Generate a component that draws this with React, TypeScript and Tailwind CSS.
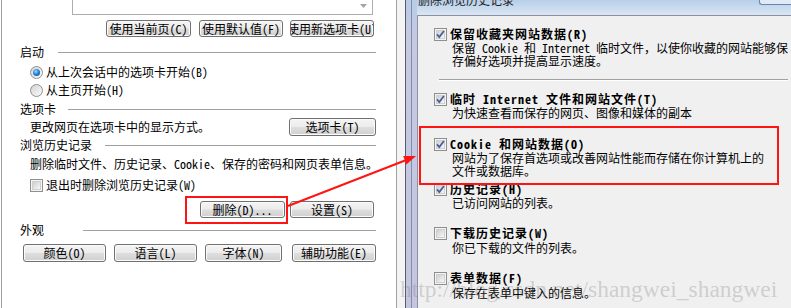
import type { ReactNode } from 'react';

function WinButton({ children, className = '' }: { children: ReactNode; className?: string }) {
  return (
    <div
      className={`flex shrink-0 items-center justify-center overflow-hidden whitespace-nowrap rounded-[3px] border border-[#707070] bg-[linear-gradient(to_bottom,#f4f4f4_0%,#ececec_48%,#dedede_52%,#d0d0d0_100%)] text-[12px] leading-none text-black shadow-[inset_0_0_0_1px_#fbfbfb] ${className}`}
    >
      {children}
    </div>
  );
}

function GroupHeader({ title, lineGap }: { title: string; lineGap: string }) {
  return (
    <div className="flex h-[14px] items-center">
      <span className="shrink-0 leading-[14px]">{title}</span>
      <div className={`h-px flex-1 bg-[#a0a0a0] ${lineGap}`} />
    </div>
  );
}

function Radio({ checked }: { checked?: boolean }) {
  return (
    <span className="flex h-[13px] w-[13px] shrink-0 items-center justify-center rounded-full border border-[#8e8f8f] bg-[linear-gradient(135deg,#d4d4d4,#fafafa)]">
      {checked && (
        <span className="h-[7px] w-[7px] rounded-full bg-[radial-gradient(circle_at_40%_35%,#9fdcff_0%,#2a84dc_45%,#0d3f8c_100%)]" />
      )}
    </span>
  );
}

function CheckBox({ checked }: { checked?: boolean }) {
  return (
    <span className="relative flex h-[13px] w-[13px] shrink-0 items-center justify-center border border-[#8e8f8f] bg-[#f4f4f4]">
      <span className="h-[9px] w-[9px] border border-[#cfcfcf] bg-[linear-gradient(135deg,#cfcfcf,#f7f7f7)]" />
      {checked && (
        <svg className="absolute inset-0" width="11" height="11" viewBox="0 0 11 11">
          <path d="M2 5.4 L4.3 8 L8.9 2" fill="none" stroke="#47609a" strokeWidth="1.8" />
        </svg>
      )}
    </span>
  );
}

function LeftPanel() {
  return (
    <div className="ml-px flex h-[308px] w-[396px] shrink-0 flex-col border-x border-[#a0a0a0] bg-white pl-[18px] pr-[20px]">
      {/* home page box, scrolled out of view */}
      <div className="ml-[52px] mr-[3px] flex h-[15px] justify-end border-x border-b border-[#abadb3]">
        <div className="flex w-[18px] justify-center pt-[4px]">
          <svg width="7" height="4" viewBox="0 0 7 4">
            <path d="M0 0 L7 0 L3.5 4 Z" fill="#a4a4a4" />
          </svg>
        </div>
      </div>

      <div className="mt-[5px] flex justify-end pr-[2px]">
        <WinButton className="h-[17px] w-[85px]">使用当前页(C)</WinButton>
        <WinButton className="ml-[8px] h-[17px] w-[84px]">使用默认值(F)</WinButton>
        <WinButton className="ml-[7px] h-[17px] w-[84px]">使用新选项卡(U)</WinButton>
      </div>

      <div className="mt-[8px]">
        <GroupHeader title="启动" lineGap="ml-[14px]" />
      </div>
      <div className="mt-[4px] flex h-[18px] items-center pl-[10px]">
        <Radio checked />
        <span className="ml-[3px]">从上次会话中的选项卡开始(B)</span>
      </div>
      <div className="flex h-[18px] items-center pl-[10px]">
        <Radio />
        <span className="ml-[3px]">从主页开始(H)</span>
      </div>

      <div className="mt-[3px]">
        <GroupHeader title="选项卡" lineGap="ml-[12px]" />
      </div>
      <div className="mt-[2px] flex h-[18px] items-center justify-between pl-[10px]">
        <span>更改网页在选项卡中的显示方式。</span>
        <WinButton className="h-[18px] w-[87px]">选项卡(T)</WinButton>
      </div>

      <div className="mt-[2px]">
        <GroupHeader title="浏览历史记录" lineGap="ml-[13px]" />
      </div>
      <div className="mt-[5px] h-[14px] whitespace-nowrap pl-[10px] leading-[14px]">
        删除临时文件、历史记录、Cookie、保存的密码和网页表单信息。
      </div>
      <div className="mt-[7px] flex h-[14px] items-center pl-[10px]">
        <CheckBox />
        <span className="ml-[3px]">退出时删除浏览历史记录(W)</span>
      </div>
      <div className="mt-[9px] flex justify-end pr-[2px]">
        <WinButton className="h-[17px] w-[85px]">删除(D)...</WinButton>
        <WinButton className="ml-[5px] h-[17px] w-[84px]">设置(S)</WinButton>
      </div>

      <div className="mt-[5px]">
        <GroupHeader title="外观" lineGap="ml-[39px]" />
      </div>
      <div className="mt-[7px] flex pl-[3px]">
        <WinButton className="h-[18px] w-[83px]">颜色(O)</WinButton>
        <WinButton className="ml-[8px] h-[18px] w-[83px]">语言(L)</WinButton>
        <WinButton className="ml-[8px] h-[18px] w-[77px]">字体(N)</WinButton>
        <WinButton className="ml-[10px] h-[18px] w-[84px]">辅助功能(E)</WinButton>
      </div>
    </div>
  );
}

const sections = [
  {
    title: '保留收藏夹网站数据(R)',
    desc: ['保留 Cookie 和 Internet 临时文件，以使你收藏的网站能够保', '存偏好选项并提高显示速度。'],
    checked: true,
    gap: 'mt-[11px]',
    descGap: 'mt-0',
  },
  {
    title: '临时 Internet 文件和网站文件(T)',
    desc: ['为快速查看而保存的网页、图像和媒体的副本'],
    checked: true,
    gap: 'mt-[11px]',
    descGap: 'mt-0',
  },
  {
    title: 'Cookie 和网站数据(O)',
    desc: ['网站为了保存首选项或改善网站性能而存储在你计算机上的', '文件或数据库。'],
    checked: true,
    gap: 'mt-[18px]',
    descGap: 'mt-0',
  },
  {
    title: '历史记录(H)',
    desc: ['已访问网站的列表。'],
    checked: true,
    gap: 'mt-[5px]',
    descGap: 'mt-0',
  },
  {
    title: '下载历史记录(W)',
    desc: ['你已下载的文件的列表。'],
    checked: false,
    gap: 'mt-[17px]',
    descGap: 'mt-[1px]',
  },
  {
    title: '表单数据(F)',
    desc: ['保存在表单中键入的信息。'],
    checked: false,
    gap: 'mt-[17px]',
    descGap: 'mt-[1px]',
  },
];

function Section({ s }: { s: (typeof sections)[number] }) {
  return (
    <div className={s.gap}>
      <div className="flex h-[14px] items-center">
        <CheckBox checked={s.checked} />
        <span className="ml-[3px] whitespace-nowrap font-bold leading-[14px] tracking-[1px]">{s.title}</span>
      </div>
      <div className={`pl-[18px] ${s.descGap}`}>
        {s.desc.map(line => (
          <div key={line} className="h-[13px] whitespace-nowrap leading-[13px]">
            {line}
          </div>
        ))}
      </div>
    </div>
  );
}

function RightDialog() {
  return (
    <div className="flex h-[308px] w-[386px] shrink-0 border-l border-[#5a5c6c] bg-[linear-gradient(to_bottom,#b7cde7_0px,#c5c9e3_40px,#c3c5e1_100%)]">
      <div className="w-[6px] shrink-0 border-r border-[#8a8ca6]" />
      <div className="w-[5px] shrink-0" />
      <div className="flex min-w-0 flex-1 flex-col">
        <div className="relative h-[15px] shrink-0 bg-[linear-gradient(to_bottom,#b8cfe9,#d9e6f3)]">
          <span className="absolute left-[1px] top-[-6px] whitespace-nowrap leading-[12px] text-[#1c1c1c]">
            删除浏览历史记录
          </span>
          <div className="absolute right-0 top-0 h-[5px] w-[32px] rounded-bl-[3px] border-b border-l border-[#6a86aa] bg-[#dfeaf6]" />
        </div>
        <div className="flex-1 overflow-hidden border-l border-t border-[#8e909f] bg-[#f0f0f0] pl-[16px]">
          <Section s={sections[0]} />
          <div className="ml-[5px] mr-[3px] mt-[12px] h-[2px] border-t border-b border-t-[#a0a0a0] border-b-white" />
          {sections.slice(1).map(s => (
            <Section key={s.title} s={s} />
          ))}
        </div>
      </div>
    </div>
  );
}

export default function App() {
  return (
    <div className="relative flex h-[308px] w-[791px] overflow-hidden bg-white font-['Noto_Sans_Mono_CJK_SC','Noto_Sans_CJK_SC',sans-serif] text-[12px] text-black">
      <LeftPanel />
      <div className="w-[8px] shrink-0 bg-[#f4f4f4]" />
      <RightDialog />

      {/* annotations */}
      <div className="pointer-events-none absolute left-[185px] top-[196px] h-[28px] w-[103px] border-2 border-[#ff1414]" />
      <div className="pointer-events-none absolute left-[419px] top-[126px] h-[59px] w-[360px] border-2 border-[#ff1414]" />
      <svg className="pointer-events-none absolute inset-0" width="791" height="308" viewBox="0 0 791 308">
        <line x1="288" y1="206" x2="405" y2="160.5" stroke="#ff1414" strokeWidth="2" />
        <polygon points="416,156 406.4,164.6 403.2,156" fill="#ff1414" />
      </svg>
      <span className="pointer-events-none absolute left-[400px] top-[275px] whitespace-nowrap font-['Liberation_Serif',serif] text-[23.5px] leading-[28px] text-[#7a7a7a]/30">
        http://blog.csdn.net/shangwei_shangwei
      </span>
    </div>
  );
}
